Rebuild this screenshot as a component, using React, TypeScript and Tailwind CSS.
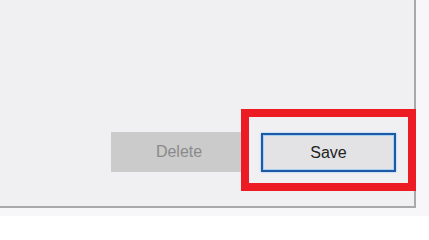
export default function App() {
  return (
    <div className="w-[429px] h-[216px] bg-[#f7f7f9] font-['Liberation_Sans',Arial,sans-serif]">
      <div className="w-[416px] h-[208px] bg-[#f0eff2] border-r-2 border-b-2 border-[#a9a9ab] flex flex-col justify-end pb-[15px]">
        <div className="flex items-start pl-[111px] mr-[-2px]">
          <button className="mt-[23px] w-[136px] h-[40px] bg-[#cbcbcb] text-[#8a8a8a] text-[16px] leading-none flex items-center justify-center">
            Delete
          </button>
          {/* highlight box */}
          <div className="relative z-10 ml-[-6px] w-[175px] h-[82px] border-8 border-[#ed1c24] bg-[#f0eff2] pl-[12px] pt-[16px]">
            <button className="w-[135px] h-[39px] bg-[#e3e3e5] border-2 border-[#1c5aa6] shadow-[inset_0_0_0_1px_#a8d0f5,0_0_2px_#8cc4f5] text-[#222] text-[16px] leading-none flex items-center justify-center">
              Save
            </button>
          </div>
        </div>
      </div>
    </div>
  )
}
